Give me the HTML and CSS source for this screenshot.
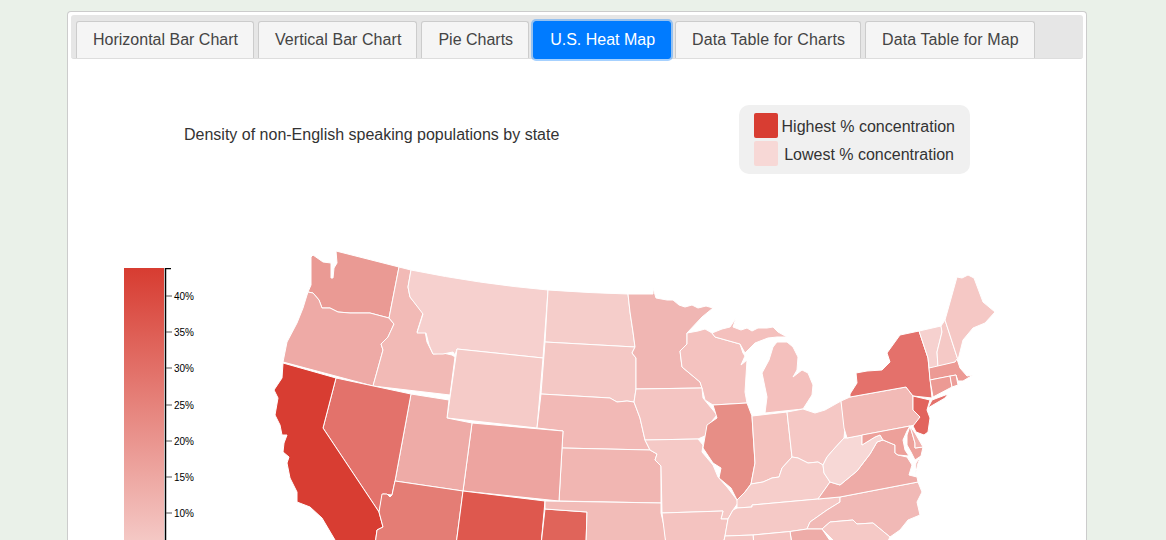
FILE: index.html
```html
<!DOCTYPE html>
<html lang="en">
  <head>
    <meta charset="utf-8" />
    <meta name="viewport" content="width=device-width, initial-scale=1" />
    <title>U.S. Heat Map</title>
    <link rel="stylesheet" href="styles.css">
  </head>
  <body>
    <div class="panel">
      <nav class="tabs">
        <a class="tab">Horizontal Bar Chart</a>
        <a class="tab slim">Vertical Bar Chart</a>
        <a class="tab">Pie Charts</a>
        <a class="tab active">U.S. Heat Map</a>
        <a class="tab wide">Data Table for Charts</a>
        <a class="tab wide">Data Table for Map</a>
      </nav>

      <div class="chart-head">
        <p class="chart-title">Density of non-English speaking populations by state</p>
        <div class="key">
          <div class="key-row"><span class="swatch high"></span><span class="key-label">Highest % concentration</span></div>
          <div class="key-row low-row"><span class="swatch low"></span><span class="key-label">Lowest % concentration</span></div>
        </div>
      </div>

      <div class="chart-row">
        <!-- both svgs use page coordinates in their viewBox, easier to trace -->
        <svg class="scale" width="80" height="280" viewBox="124 268 80 280">
          <defs>
            <linearGradient id="ramp" gradientUnits="userSpaceOnUse" x1="0" y1="268" x2="0" y2="585">
              <stop offset="0" stop-color="#d73c31" />
              <stop offset="1" stop-color="#f9dfdd" />
            </linearGradient>
          </defs>
          <rect x="124" y="268" width="40" height="280" fill="url(#ramp)" />
          <path class="axis" d="M171 268.5H165.5V548" />
          <g class="ticks">
            <path d="M166 296h6M166 332h6M166 368h6M166 405h6M166 441h6M166 477h6M166 513h6" />
          </g>
          <text x="174" y="299.5">40%</text>
          <text x="174" y="335.5">35%</text>
          <text x="174" y="371.5">30%</text>
          <text x="174" y="408.5">25%</text>
          <text x="174" y="444.5">20%</text>
          <text x="174" y="480.5">15%</text>
          <text x="174" y="516.5">10%</text>
        </svg>

        <svg class="map" width="740" height="300" viewBox="270 245 740 300">
          <path class="st wa" d="M336 251L399 267L389 318L370 313L364 313L350 313L338 312L330 308L322 308L319 300L313 293L308 292L311 285L311 257L313 255L323 262L331 263L331 278L333 278L334 268L337 263Z" />
          <path class="st or" d="M308 292L313 293L319 300L322 308L330 308L338 312L350 313L364 313L370 313L389 318L394 324L388 337L381 344L383 350L373 386L283 362L285 352L287 342L297 323L303 308L307 295Z" />
          <path class="st id" d="M399 267L411 270L408 287L410 297L423 313L417 332L425 331L427 342L433 354L443 353L452 355L455 357L450 395L373 386L383 350L381 344L388 337L394 324L389 318Z" />
          <path class="st mt" d="M411 270Q480 284 548 290L543 358L457 349L455 355L453 352L443 354L433 354L429 345L426 333L417 333L423 314L410 297L408 287Z" />
          <path class="st wy" d="M457 349L543 358L537 428L447 418Z" />
          <path class="st nd" d="M548 290Q590 293 628 294L630 312L633 332L635 347L545 342Z" />
          <path class="st sd" d="M545 342L635 347L632 353L636 358L636 389L634 402L627 401L617 402L610 398L541 394Z" />
          <path class="st ne" d="M541 394L610 398L617 402L627 401L634 402L640 418L645 440L650 450L562 448L563 431L537 428Z" />
          <path class="st ks" d="M562 448L650 450L657 454L655 460L661 466L661 503L559 501Z" />
          <path class="st co" d="M472 423L563 431L559 501L463 491Z" />
          <path class="st ut" d="M411 394L449 400L447 418L472 423L463 491L395 481Z" />
          <path class="st nv" d="M336 378L411 394L395 481L392 495L383 494L379 512L323 428Z" />
          <path class="st ca" d="M283 363L336 378L323 428L379 512L383 527L377 530L375 545L338 545L335 540L322 518L310 507L297 502L297 492L290 478L287 463L289 457L283 452L284 443L287 435L282 435L280 425L275 415L278 398L274 390L282 378Z" />
          <path class="st az" d="M395 481L463 491L456 545L375 545L377 530L383 527L379 512L382 494L387 494L390 497L392 495Z" />
          <path class="st nm" d="M463 491L545 501L541 545L456 545Z" />
          <path class="st tx" d="M545 509L587 512L586 545L541 545Z" />
          <path class="st ok" d="M545 501L661 503L661 513L665 530L666 545L586 545L587 512L545 509Z" />
          <path class="st mn" d="M628 294L653 294L653 288L656 298L667 300L673 300L679 305L685 307L692 305L698 308L706 306L713 308L702 317L687 333L687 344L680 351L682 367L700 382L702 388L636 389L636 358L632 353L635 347L633 332L630 312Z" />
          <path class="st wi" d="M687 333L698 331L705 329L712 333L715 337L740 344L743 353L745 356L741 365L747 360L745 392L747 403L713 405L705 400L702 388L700 382L682 367L680 351L687 344Z" />
          <path class="st mi" d="M712 333L722 329L730 327L736 318L733 327L741 330L747 328L752 331L758 328L767 328L773 327L778 332L787 337L777 337L768 338L755 343L745 353L740 344L715 337Z" />
          <path class="st mi" d="M777 342L787 342L793 347L798 357L797 370L793 377L802 370L808 373L813 385L812 395L803 409L765 413L767 397L762 373L769 360L773 347Z" />
          <path class="st ia" d="M636 389L702 388L703 398L717 415L707 427L707 435L698 439L645 440L640 418L634 402Z" />
          <path class="st mo" d="M645 440L698 439L703 445L702 452L713 465L718 477L727 487L737 500L738 503L733 510L728 519L721 519L723 511L662 513L661 466L655 460L657 454L650 450Z" />
          <path class="st ar" d="M662 513L723 511L721 519L728 519L725 536L723 545L666 545Z" />
          <path class="st il" d="M713 405L747 403L752 416L755 463L751 484L745 492L737 500L731 488L719 478L721 468L713 463L703 448L707 425L717 418Z" />
          <path class="st in" d="M752 416L787 412L792 457L782 468L779 477L772 478L763 482L751 484L755 463Z" />
          <path class="st oh" d="M787 412L803 409L815 413L825 410L841 401L845 428L844 438L833 450L827 457L823 465L818 462L808 463L798 458L792 457Z" />
          <path class="st ky" d="M792 457L798 458L808 463L818 462L823 465L824 473L830 482L818 499L752 505L752 507L737 508L737 500L745 492L751 484L763 482L772 478L779 477L782 468Z" />
          <path class="st tn" d="M737 508L752 507L752 505L818 499L840 497L840 502L827 510L810 522L807 529L790 531.5L753 535L725 536L728 519L733 510Z" />
          <path class="st nc" d="M840 497L918 482L922 492L917 502L920 515L908 520L900 530L890 537L873 523L857 524L853 520L830 522L822 529L807 529L810 522L827 510L840 502Z" />
          <path class="st va" d="M818 499L840 497L918 482L917 477L909 475L912 465L907 457L898 455L895 453L895 445L883 440L877 442L870 454L857 471L840 485L830 482Z" />
          <path class="st wv" d="M823 465L827 457L833 450L844 438L847 438L862 435L862 445L875 437L880 435L883 440L877 442L870 454L857 471L840 485L830 482L824 473Z" />
          <path class="st pa" d="M841 401L850 397L906 387L913 396L913 410L920 417L915 425L910 426L847 438L844 428Z" />
          <path class="st ny" d="M850 394L857 383L856 373L867 371L882 370L890 362L887 353L900 335L919 331L928 358L932 398L913 396L906 387L850 397Z" />
          <path class="st ny" d="M932 400L948 394L945 398L933 405L928 408Z" />
          <path class="st nj" d="M913 396L930 400L927 410L930 418L928 432L924 435L916 432L913 426L920 417L913 410Z" />
          <path class="st vt" d="M919 331L941 326L942 332L937 352L938 367L929 368L928 358Z" />
          <path class="st nh" d="M941 326L945 320L958 360L955 362L938 367L937 352L942 332Z" />
          <path class="st me" d="M945 320L952 295L957 277L962 278L968 275L974 278L983 302L995 312L985 323L973 328L963 340L958 360Z" />
          <path class="st ma" d="M929 368L955 362L957 359L960 368L967 376L973 375L963 381L958 381L956 375L930 380Z" />
          <path class="st ct" d="M930 380L950 376L952 387L933 397Z" />
          <path class="st ri" d="M950 376L956 375L958 385L952 387Z" />
          <path class="st md" d="M862 435L910 426L907 431L903 440L905 450L909 456L898 455L895 453L895 445L883 440L880 435L875 437L862 445Z" />
          <path class="st md" d="M910 426L915 443L915 448L923 447L921 456L915 460L911 452L907 445L907 435Z" />
          <path class="st de" d="M910 426L915 433L923 447L915 448L915 443Z" />
          <path class="st va" d="M921 456L918 463L915 476L916 463Z" />
          <path class="st sc" d="M822 529L830 522L853 520L857 524L873 523L890 537L886 545L838 545Z" />
          <path class="st ga" d="M790 531.5L807 529L822 529L833 545L792 545Z" />
          <path class="st al" d="M753 535L790 531.5L792 545L754 545Z" />
          <path class="st ms" d="M725 536L753 535L754 545L723 545Z" />
        </svg>
      </div>
    </div>
  </body>
</html>
```

FILE: styles.css
```css
html, body {
  height: 540px;
  overflow: hidden;
}

body {
  margin: 0;
  background-color: #eaf1e9;
  color: #333;
  font-family: "Liberation Sans", Arial, sans-serif;
  font-size: 16px;
}

/* runs off the bottom of the window, so no bottom border */
.panel {
  width: 1012px;
  height: 525px;
  margin: 11px 0 0 67px;
  padding: 3px 3px 0;
  border: 1px solid #ccc;
  border-bottom: 0;
  border-radius: 4px 4px 0 0;
  background-color: #fff;
  overflow: hidden;
}

/* tab strip */
.tabs {
  display: flex;
  gap: 4px;
  padding: 6px 3px 0 5px;
  border-bottom: 1px solid #ddd;
  border-radius: 3px;
  background-color: #e6e6e6;
}

.tab {
  box-sizing: border-box;
  height: 37px;
  padding: 0 15px 0 16px;
  border: 1px solid #ccc;
  border-bottom: 0;
  border-radius: 3px 3px 0 0;
  background-color: #f5f5f5;
  color: #444;
  line-height: 36px;
}

.tab.slim {
  letter-spacing: 0.06px;
}

.tab.wide {
  letter-spacing: 0.1px;
}

.tab.active {
  height: 38px;
  margin-bottom: -1px;
  border: 1px solid #007bff;
  border-radius: 3px;
  background-color: #007bff;
  box-shadow: 0 0 0 2px rgba(0, 123, 255, 0.35);
  color: #fff;
}

/* title and key */
.chart-head {
  display: flex;
  justify-content: space-between;
  align-items: flex-start;
  padding: 46px 113px 0;
}

.chart-title {
  margin: 21px 0 0;
}

.key {
  display: flex;
  flex-direction: column;
  gap: 3px;
  align-items: flex-end;
  width: 208px;
  padding: 8px;
  padding-right: 15px;
  border-radius: 10px;
  background-color: #f0f0f0;
}

.key-row {
  display: flex;
  align-items: center;
  gap: 4px;
  color: #333;
}

.key-label {
  padding-top: 2px;
}

.low-row {
  gap: 6px;
  padding-right: 1px;
}

.swatch {
  width: 24px;
  height: 25px;
  border-radius: 2px;
}

.swatch.high {
  background-color: #d83d32;
}

.swatch.low {
  background-color: #f7d8d6;
}

/* scale and map */
.chart-row {
  display: flex;
  align-items: flex-start;
  margin-top: 71px;
  padding-left: 53px;
}

.scale {
  flex: none;
  margin-top: 23px;
}

.scale text {
  fill: #000;
  font-size: 10px;
}

.axis {
  fill: none;
  stroke: #000;
  stroke-width: 1.5;
}

.ticks path {
  stroke: #555;
  stroke-width: 1.2;
}

.map {
  flex: none;
  margin-left: 66px;
}

.st {
  stroke: #fff;
  stroke-width: 1;
  stroke-linejoin: round;
}

.wa { fill: #ea9a94; }
.or { fill: #eeaaa6; }
.id { fill: #f2bab6; }
.mt { fill: #f6d0ce; }
.wy { fill: #f5cbc8; }
.nd { fill: #f5cdca; }
.sd { fill: #f4c8c5; }
.ne { fill: #f2b9b6; }
.ks { fill: #f1b6b2; }
.co { fill: #eda4a0; }
.ut { fill: #eeaba7; }
.nv { fill: #e3726b; }
.ca { fill: #d83d32; }
.az { fill: #e47d75; }
.nm { fill: #de584e; }
.tx { fill: #e0645a; }
.ok { fill: #f2bcb8; }
.mn { fill: #f0b6b3; }
.wi { fill: #f4c2bf; }
.mi { fill: #f4c0bd; }
.ia { fill: #f4c5c2; }
.mo { fill: #f5c9c6; }
.ar { fill: #f4c3c0; }
.il { fill: #e78e86; }
.in { fill: #f4c2be; }
.oh { fill: #f5c8c5; }
.ky { fill: #f6cecb; }
.tn { fill: #f5c9c6; }
.nc { fill: #f1b9b6; }
.va { fill: #eeaba7; }
.wv { fill: #f7d8d6; }
.pa { fill: #f2bab6; }
.ny { fill: #e4716b; }
.nj { fill: #e2645d; }
.vt { fill: #f6d1cf; }
.nh { fill: #f5c9c6; }
.me { fill: #f5c8c5; }
.ma { fill: #ec9a94; }
.ct { fill: #ec9a94; }
.ri { fill: #ec9f9a; }
.md { fill: #eda09a; }
.de { fill: #f1b0ac; }
.sc { fill: #f5c9c6; }
.ga { fill: #eeaca8; }
.al { fill: #f4c3c0; }
.ms { fill: #f4c6c3; }
```
